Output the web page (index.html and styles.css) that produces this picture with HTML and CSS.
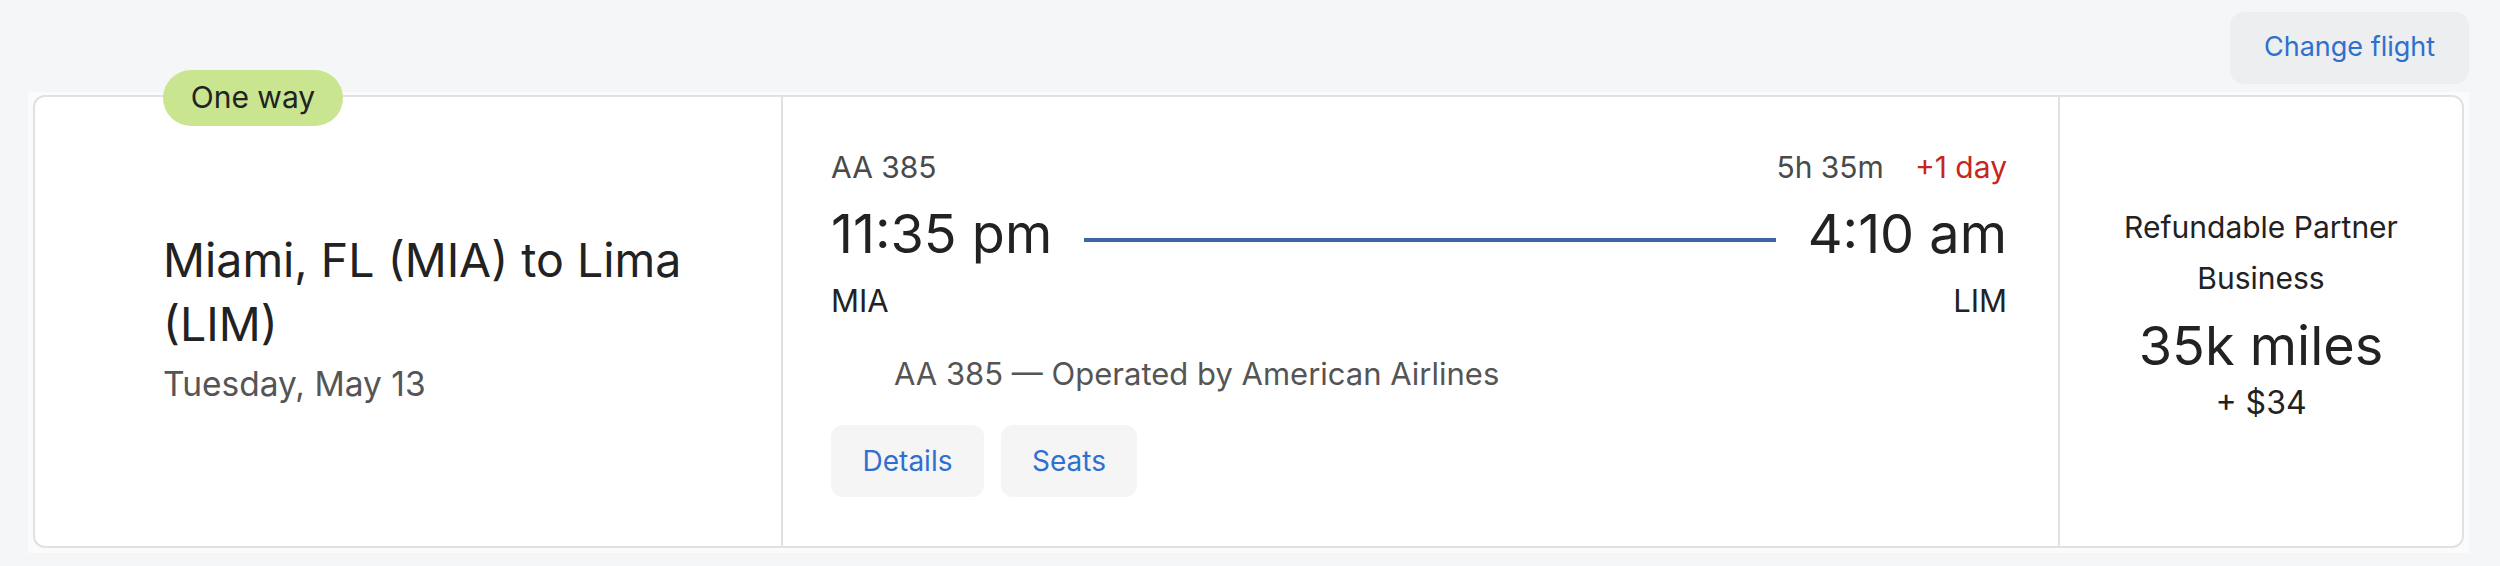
FILE: index.html
```html
<!DOCTYPE html>
<html lang="en">
<head>
<meta charset="utf-8">
<title>Flight</title>
<link rel="stylesheet" href="styles.css">
</head>
<body>
<div class="page">
  <div class="toolbar">
    <button class="change-btn" type="button">Change flight</button>
  </div>
  <div class="wrap">
    <div class="card">
      <span class="badge">One way</span>
      <div class="col-route">
        <div class="route">Miami, FL (MIA) to Lima (LIM)</div>
        <div class="date">Tuesday, May 13</div>
      </div>
      <div class="col-flight">
        <div class="row-top">
          <span class="flight-no">AA 385</span>
          <span class="duration">5h 35m<span class="plus-day">+1 day</span></span>
        </div>
        <div class="row-times">
          <span class="time">11:35 pm</span>
          <span class="line"></span>
          <span class="time">4:10 am</span>
        </div>
        <div class="row-airports">
          <span>MIA</span>
          <span>LIM</span>
        </div>
        <div class="operated">AA 385 — Operated by American Airlines</div>
        <div class="actions">
          <button class="small-btn btn-details" type="button">Details</button>
          <button class="small-btn btn-seats" type="button">Seats</button>
        </div>
      </div>
      <div class="col-price">
        <div class="fare">Refundable Partner Business</div>
        <div class="miles">35k miles</div>
        <div class="cash">+ $34</div>
      </div>
    </div>
  </div>
</div>
</body>
</html>
```
FILE: styles.css
```css
* { box-sizing: border-box; }
html, body { margin: 0; padding: 0; }
body {
  background: #f5f6f8;
  font-family: "Inter", "Open Sans", "Liberation Sans", sans-serif;
  color: #232323;
  width: 2500px;
  height: 566px;
  overflow: hidden;
}
.page { padding: 12px 31px 0 28px; }
.toolbar {
  display: flex;
  justify-content: flex-end;
  margin-bottom: 8px;
}
.change-btn {
  width: 239px;
  height: 72px;
  border: none;
  border-radius: 14px;
  background: #eceef0;
  color: #2f70cf;
  font-family: inherit;
  font-size: 27px;
  padding: 0 0 4px;
}
.wrap {
  background: #fbfbfc;
  padding: 3px 5px 5px;
}
.card {
  position: relative;
  background: #fff;
  border: 2px solid #e1e1e1;
  border-radius: 12px;
  height: 453px;
  display: grid;
  grid-template-columns: 748px 1277px 1fr;
}
.badge {
  position: absolute;
  left: 128px;
  top: -27px;
  width: 180px;
  height: 56px;
  border-radius: 28px;
  background: #c9e590;
  color: #222;
  font-size: 30px;
  display: flex;
  align-items: center;
  justify-content: center;
  padding-bottom: 2px;
}
.col-route {
  border-right: 2px solid #e1e1e1;
  padding: 0 30px 4px 128px;
  display: flex;
  flex-direction: column;
  justify-content: center;
}
.route {
  font-size: 46.5px;
  line-height: 64px;
  color: #222;
}
.date {
  font-size: 33.5px;
  line-height: 56px;
  color: #555;
}
.col-flight {
  border-right: 2px solid #e1e1e1;
  padding: 50px 51px 0 48px;
  display: flex;
  flex-direction: column;
}
.row-top {
  display: flex;
  justify-content: space-between;
  font-size: 30px;
  line-height: 40px;
  color: #4a4a4a;
}
.plus-day {
  color: #c3271f;
  margin-left: 31px;
}
.row-times {
  display: flex;
  align-items: center;
  gap: 32px;
  margin-top: 12px;
}
.time {
  font-size: 54px;
  line-height: 70px;
  color: #222;
}
.line {
  flex: 1;
  height: 4px;
  margin-top: 12px;
  background: #3d659f;
}
.row-airports {
  display: flex;
  justify-content: space-between;
  font-size: 31px;
  line-height: 40px;
  color: #222;
  margin-top: 12px;
}
.operated {
  margin-top: 33px;
  padding-left: 63px;
  font-size: 31px;
  line-height: 40px;
  color: #555;
}
.actions {
  display: flex;
  gap: 17px;
  margin-top: 31px;
}
.small-btn {
  height: 72px;
  padding: 0;
  border: none;
  border-radius: 12px;
  background: #f5f5f6;
  color: #2f70cf;
  font-family: inherit;
  font-size: 28px;
}
.btn-details { width: 153px; }
.btn-seats { width: 136px; }
.col-price {
  display: flex;
  flex-direction: column;
  align-items: center;
  justify-content: center;
  text-align: center;
  padding: 0 40px 17px;
}
.fare {
  font-size: 30px;
  line-height: 51px;
  color: #222;
}
.miles {
  font-size: 54px;
  line-height: 70px;
  margin-top: 7px;
  color: #222;
}
.cash {
  font-size: 32px;
  line-height: 44px;
  color: #222;
}
```
